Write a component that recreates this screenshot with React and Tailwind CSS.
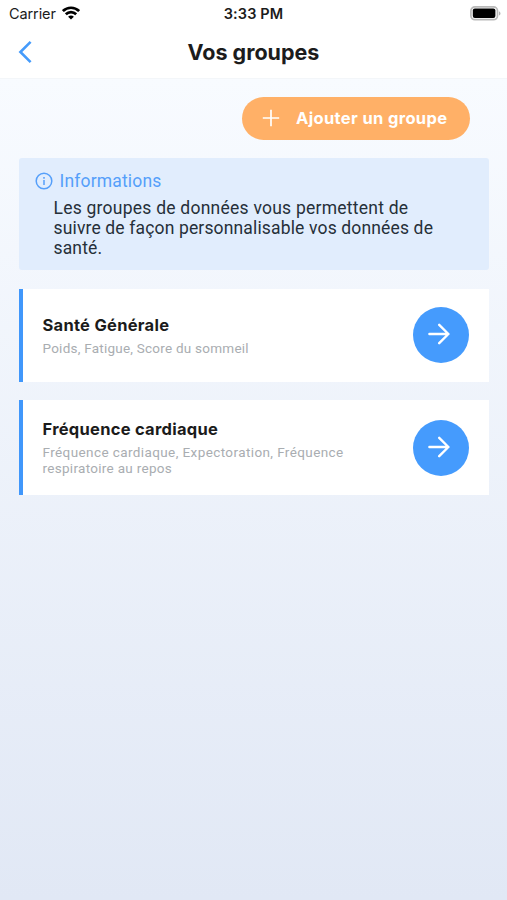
import React from 'react';

function StatusBar() {
  return (
    <div className="grid h-7 grid-cols-3 items-center text-[14px] leading-7 text-[#1b1b1b]">
      <div className="flex items-center gap-[6px] pl-[9px]">
        <span className="font-['Inter',sans-serif] text-[14.5px] tracking-[-0.1px]">Carrier</span>
        <svg className="mb-[2px] h-[14px] w-[18px]" viewBox="0 0 18 14" fill="none" stroke="#000" strokeWidth="2.7">
          <path d="M0.9 5.1C5.5 0.6 12.5 0.6 17.1 5.1" />
          <path d="M3.8 8.3C6.8 5.4 11.2 5.4 14.2 8.3" />
          <path d="M6.1 10.7C7.8 9.1 10.2 9.1 11.9 10.7L9 13.6Z" fill="#000" stroke="none" />
        </svg>
      </div>
      <span className="text-center font-['Inter',sans-serif] text-[14.5px] font-semibold tracking-[0.1px] whitespace-nowrap">3:33 PM</span>
      <div className="flex justify-end pr-[6px]">
        <svg className="mb-[2px] h-[15px] w-[31px]" viewBox="0 0 31 15">
          <rect x="0.9" y="0.9" width="26.6" height="12.8" rx="4" fill="#fff" stroke="#b9b9b9" strokeWidth="1.7" />
          <rect x="2.8" y="2.6" width="22.6" height="9.4" rx="2" fill="#000" />
          <path d="M29 5.2C31 6 31 8.7 29 9.5Z" fill="#b4b4b4" />
        </svg>
      </div>
    </div>
  );
}

function Header() {
  return (
    <div className="grid h-[50px] grid-cols-[60px_1fr_60px] items-center pb-[2px]">
      <svg className="ml-[17px] h-[24px] w-[16px]" viewBox="0 0 16 24" fill="none" stroke="#459bfb" strokeWidth="2.6">
        <path d="M13.6 1.8L3.4 12L13.6 22.2" />
      </svg>
      <h1 className="pt-px text-center font-['Inter',sans-serif] text-[21.5px] font-bold text-[#1c1c1c]">Vos groupes</h1>
    </div>
  );
}

function GroupCard({ title, detail, className }) {
  return (
    <div className={`flex w-[470px] items-center justify-between border-l-4 border-[#4097fb] bg-white pr-5 pl-[19.5px] ${className}`}>
      <div className="whitespace-nowrap">
        <h2 className="font-['Inter',sans-serif] text-[16.5px] leading-[22px] font-bold tracking-[0.27px] text-[#1b1b1b]">{title}</h2>
        <p className="mt-1 mb-px text-[13.5px] leading-4 text-[#a9adb1]">
          {detail.map(({ text, tracking }) => (
            <span key={text} className={`block ${tracking}`}>{text}</span>
          ))}
        </p>
      </div>
      <div className="flex size-14 items-center justify-center rounded-full bg-[#459bfd]">
        <svg className="mr-1 mb-[2px] h-[22px] w-[22px]" viewBox="0 0 22 22" fill="none" stroke="#fff" strokeWidth="2.4" strokeLinecap="round" strokeLinejoin="round">
          <path d="M1.4 11H20.4M11.2 1.8L20.4 11L11.2 20.2" />
        </svg>
      </div>
    </div>
  );
}

export default function App() {
  return (
    <div className="flex h-[900px] w-[507px] flex-col bg-white font-['Roboto','Liberation_Sans',sans-serif]">
      <StatusBar />
      <Header />
      <main className="flex flex-1 flex-col border-t border-[#f3f6f9] bg-linear-to-b from-[#f8fbff] to-[#e1e8f5] pl-[19px]">
        <button className="mt-[18px] ml-[223px] flex h-[43px] w-[228px] items-center rounded-full bg-[#ffb067] pl-[20px] text-white">
          <svg className="mb-[2px] size-[18px]" viewBox="0 0 18 18" fill="none" stroke="#fff" strokeWidth="1.7">
            <path d="M0.8 9H17.2M9 0.8V17.2" />
          </svg>
          <span className="ml-[16px] font-['Inter',sans-serif] text-[16.5px] font-bold tracking-[0.36px] whitespace-nowrap">Ajouter un groupe</span>
        </button>
        <section className="mt-[18px] h-[112px] w-[470px] rounded-[3px] bg-[#e1edfd] pt-3 pl-4">
          <div className="flex h-[22px] items-center text-[#559ffa]">
            <svg className="size-[18px]" viewBox="0 0 18 18" fill="none" stroke="currentColor" strokeWidth="1.5">
              <circle cx="9" cy="9" r="7.8" />
              <path d="M9 8V13M9 5V6.7" />
            </svg>
            <span className="ml-[6.5px] text-[17.5px] tracking-[0.17px]">Informations</span>
          </div>
          <p className="mt-[6px] ml-[18.5px] text-[17.5px] leading-5 whitespace-nowrap text-[#263039]">
            <span className="block tracking-[0.24px]">Les groupes de données vous permettent de</span>
            <span className="block tracking-[0.15px]">suivre de façon personnalisable vos données de</span>
            <span className="block tracking-[0.15px]">santé.</span>
          </p>
        </section>
        <GroupCard
          className="mt-[19px] h-[93px] pb-px"
          title="Santé Générale"
          detail={[{ text: 'Poids, Fatigue, Score du sommeil', tracking: 'tracking-[0.24px]' }]}
        />
        <GroupCard
          className="mt-[18px] h-[95px]"
          title="Fréquence cardiaque"
          detail={[
            { text: 'Fréquence cardiaque, Expectoration, Fréquence', tracking: 'tracking-[0.4px]' },
            { text: 'respiratoire au repos', tracking: 'tracking-[0.3px]' },
          ]}
        />
      </main>
    </div>
  );
}
